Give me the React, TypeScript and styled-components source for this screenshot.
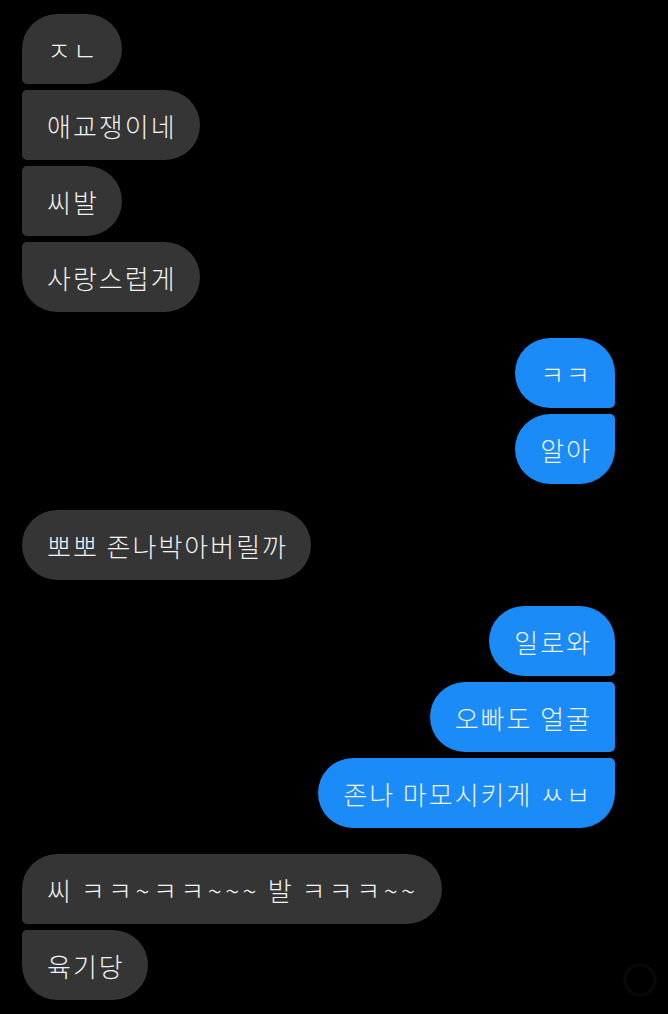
import React from "react";
import styled, { createGlobalStyle, css } from "styled-components";

const GlobalStyle = createGlobalStyle`
  html, body {
    margin: 0;
    padding: 0;
    background: #000000;
  }
  body {
    font-family: "Noto Sans CJK KR", "Noto Sans", sans-serif;
  }
`;

type Side = "in" | "out";
type Pos = "single" | "first" | "middle" | "last";

const Screen = styled.div`
  width: 668px;
  height: 1014px;
  background: #000000;
  box-sizing: border-box;
  padding: 14px 53px 0 22px;
  display: flex;
  flex-direction: column;
  gap: 26px;
  position: relative;
  overflow: hidden;
`;

const Group = styled.div<{ $side: Side }>`
  display: flex;
  flex-direction: column;
  gap: 6px;
  align-items: ${(p) => (p.$side === "in" ? "flex-start" : "flex-end")};
`;

const BIG = 35;
const SMALL = 5;

const corners = (side: Side, pos: Pos) => {
  const top = pos === "single" || pos === "first" ? BIG : SMALL;
  const bottom = pos === "single" || pos === "last" ? BIG : SMALL;
  if (side === "in") {
    return css`
      border-radius: ${top}px ${BIG}px ${BIG}px ${bottom}px;
    `;
  }
  return css`
    border-radius: ${BIG}px ${top}px ${bottom}px ${BIG}px;
  `;
};

const Bubble = styled.div<{ $side: Side; $pos: Pos }>`
  height: 70px;
  box-sizing: border-box;
  padding: 0 23px 0 25px;
  display: flex;
  align-items: center;
  font-size: 26px;
  font-weight: 300;
  color: #f2f2f2;
  white-space: nowrap;
  letter-spacing: 2px;
  background: ${(p) => (p.$side === "in" ? "#353535" : "#1b8cf7")};
  ${(p) => corners(p.$side, p.$pos)}
`;

const Text = styled.span`
  white-space: pre;
`;

// jamo-only runs are drawn wider in the source font
const Wide = styled.span`
  letter-spacing: 3.5px;
`;

const Watermark = styled.svg`
  position: absolute;
  right: 8px;
  bottom: 14px;
`;

const groups: { side: Side; lines: React.ReactNode[] }[] = [
  { side: "in", lines: ["ㅈㄴ", "애교쟁이네", "씨발", "사랑스럽게"] },
  { side: "out", lines: ["ㅋㅋ", "알아"] },
  { side: "in", lines: ["뽀뽀 존나박아버릴까"] },
  { side: "out", lines: ["일로와", "오빠도 얼굴", "존나 마모시키게 ㅆㅂ"] },
  {
    side: "in",
    lines: [
      <>
        {"씨 "}
        <Wide>ㅋㅋ~ㅋㅋ~~~</Wide>
        {" 발 "}
        <Wide>ㅋㅋㅋ~~</Wide>
      </>,
      "육기당",
    ],
  },
];

const posOf = (i: number, n: number): Pos => {
  if (n === 1) return "single";
  if (i === 0) return "first";
  if (i === n - 1) return "last";
  return "middle";
};

export default function App() {
  return (
    <>
      <GlobalStyle />
      <Screen>
        {groups.map((g, gi) => (
          <Group key={gi} $side={g.side}>
            {g.lines.map((line, i) => (
              <Bubble key={i} $side={g.side} $pos={posOf(i, g.lines.length)}>
                <Text>{line}</Text>
              </Bubble>
            ))}
          </Group>
        ))}
        <Watermark width="40" height="40" viewBox="0 0 40 40">
          <circle cx="20" cy="20" r="15" fill="none" stroke="#090909" strokeWidth="3" />
        </Watermark>
      </Screen>
    </>
  );
}
